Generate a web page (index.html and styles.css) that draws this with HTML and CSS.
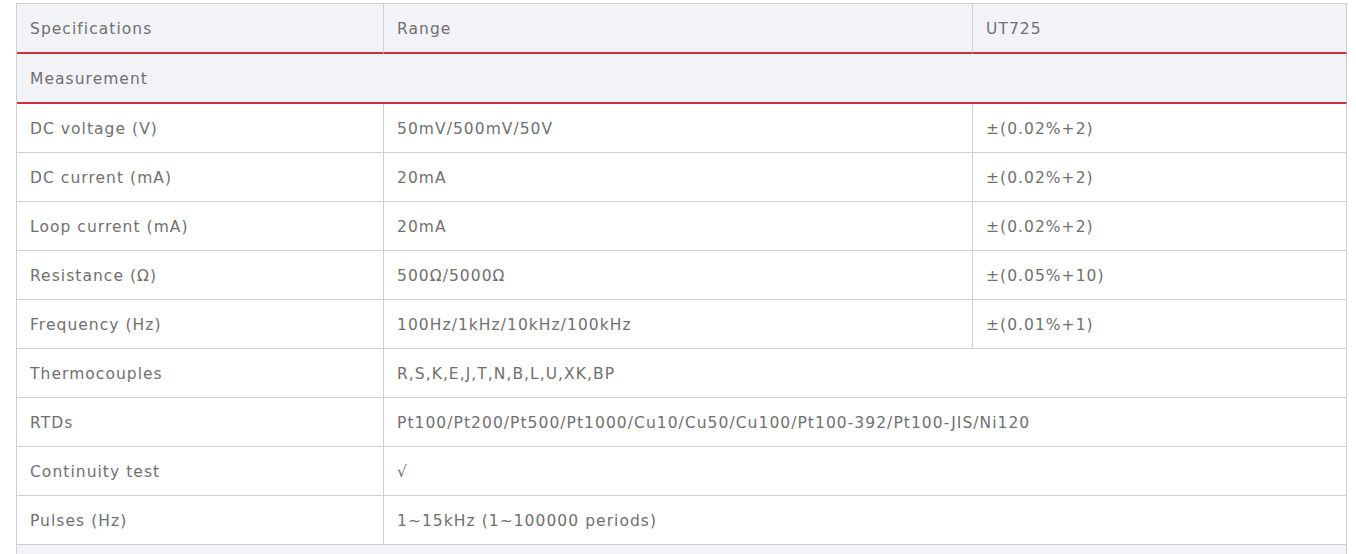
FILE: index.html
```html
<!DOCTYPE html>
<html lang="en">
<head>
<meta charset="utf-8">
<title>UT725 Specifications</title>
<link rel="stylesheet" href="styles.css">
</head>
<body>
<div class="page">
<table class="spec">
  <colgroup>
    <col class="c1"><col class="c2"><col class="c3">
  </colgroup>
  <tr class="head">
    <td>Specifications</td><td>Range</td><td>UT725</td>
  </tr>
  <tr class="section">
    <td colspan="3">Measurement</td>
  </tr>
  <tr><td>DC voltage (V)</td><td>50mV/500mV/50V</td><td>±(0.02%+2)</td></tr>
  <tr><td>DC current (mA)</td><td>20mA</td><td>±(0.02%+2)</td></tr>
  <tr><td>Loop current (mA)</td><td>20mA</td><td>±(0.02%+2)</td></tr>
  <tr><td>Resistance (Ω)</td><td>500Ω/5000Ω</td><td>±(0.05%+10)</td></tr>
  <tr><td>Frequency (Hz)</td><td>100Hz/1kHz/10kHz/100kHz</td><td>±(0.01%+1)</td></tr>
  <tr><td>Thermocouples</td><td colspan="2">R,S,K,E,J,T,N,B,L,U,XK,BP</td></tr>
  <tr><td>RTDs</td><td colspan="2">Pt100/Pt200/Pt500/Pt1000/Cu10/Cu50/Cu100/Pt100-392/Pt100-JIS/Ni120</td></tr>
  <tr><td>Continuity test</td><td colspan="2">√</td></tr>
  <tr><td>Pulses (Hz)</td><td colspan="2">1~15kHz (1~100000 periods)</td></tr>
  <tr class="section plain">
    <td colspan="3">&nbsp;</td>
  </tr>
</table>
</div>
</body>
</html>
```
FILE: styles.css
```css
html, body {
  margin: 0;
  padding: 0;
  background: #ffffff;
}
.page {
  padding: 3px 10px 0 16px;
}
.spec {
  width: 1330px;
  table-layout: fixed;
  border-collapse: separate;
  border-spacing: 0;
  border-top: 1px solid #d0d0d0;
  border-left: 1px solid #d0d0d0;
  font-family: "DejaVu Sans", sans-serif;
  font-size: 15.5px;
  letter-spacing: 1.05px;
  color: #707070;
}
.c1 { width: 367px; }
.c2 { width: 589px; }
.c3 { width: 374px; }
.spec td {
  height: 47px;
  padding: 1px 13px 0;
  border-right: 1px solid #d0d0d0;
  border-bottom: 1px solid #d0d0d0;
  vertical-align: middle;
  white-space: nowrap;
}
.head td {
  background: #f2f3f7;
  border-bottom: 2px solid #c8323c;
}
.section td {
  background: #f2f3f7;
  border-bottom: 2px solid #c8323c;
}
.section.plain td {
  border-bottom: 1px solid #d0d0d0;
}
```
